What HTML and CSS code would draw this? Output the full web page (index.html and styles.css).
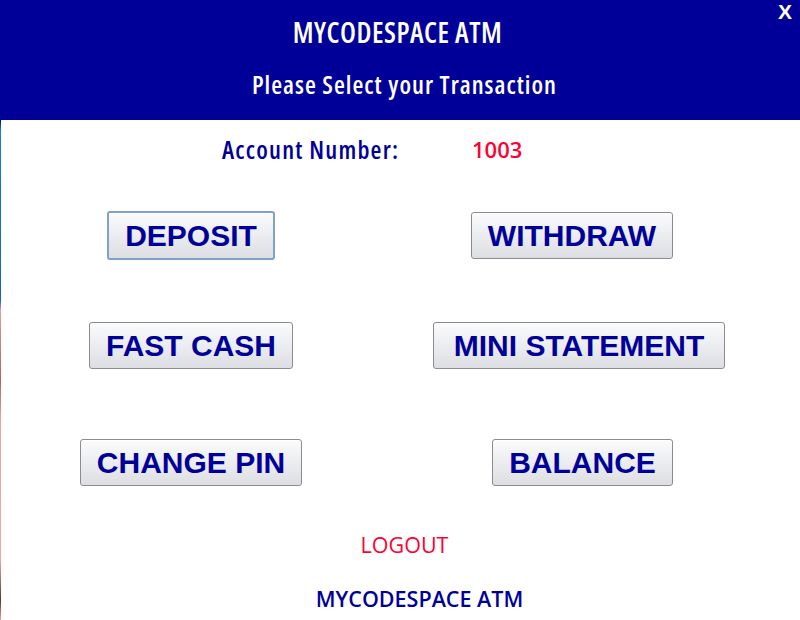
FILE: index.html
```html
<!DOCTYPE html>
<html>
<head>
<meta charset="utf-8">
<link rel="stylesheet" href="styles.css">
</head>
<body>
<div class="window">
  <div class="edge"></div>
  <div class="main">
    <header class="header">
      <div class="close">X</div>
      <div class="title">MYCODESPACE ATM</div>
      <div class="subtitle">Please Select your Transaction</div>
    </header>
    <div class="account">
      <span class="acc-label">Account Number:</span>
      <span class="acc-num">1003</span>
    </div>
    <div class="grid">
      <div class="cell r1"><button class="btn focus">DEPOSIT</button></div>
      <div class="cell r1 right"><button class="btn">WITHDRAW</button></div>
      <div class="cell r2"><button class="btn">FAST CASH</button></div>
      <div class="cell r2 right"><button class="btn wide">MINI STATEMENT</button></div>
      <div class="cell r3"><button class="btn">CHANGE PIN</button></div>
      <div class="cell r3 right"><button class="btn">BALANCE</button></div>
    </div>
    <div class="logout">LOGOUT</div>
    <div class="footer">MYCODESPACE ATM</div>
  </div>
</div>
</body>
</html>
```
FILE: styles.css
```css
html, body {
  margin: 0;
  padding: 0;
  background: #ffffff;
}
.window {
  width: 800px;
  height: 620px;
  display: flex;
  overflow: hidden;
}
.edge {
  width: 1px;
  flex: none;
  background: linear-gradient(#00009a 0, #00009a 120px, #1a7fd0 130px, #1166b8 300px, #e89a9a 310px, #b06060 380px, #f0a0a0 420px, #f4a6a6 560px, #603030 600px, #f0a0a0 620px);
}
.main {
  flex: 1;
  display: flex;
  flex-direction: column;
  font-family: "Open Sans", "Noto Sans", sans-serif;
}
.main > * {
  flex: none;
}
.header {
  position: relative;
  height: 120px;
  background: #000099;
  color: #ffffff;
  display: flex;
  flex-direction: column;
  align-items: center;
  box-sizing: border-box;
  padding-top: 17px;
}
.close {
  position: absolute;
  right: 8px;
  top: 1px;
  font-family: "Liberation Sans", Arial, sans-serif;
  font-weight: bold;
  font-size: 21px;
  line-height: 22px;
}
.title {
  font-size: 28px;
  font-weight: 600;
  font-stretch: 75%;
  letter-spacing: 0.5px;
  line-height: 30px;
  margin-left: -6px;
}
.subtitle {
  margin-top: 22px;
  font-size: 25px;
  font-weight: 600;
  font-stretch: 75%;
  letter-spacing: 1px;
  line-height: 30px;
  margin-left: 8px;
}
.account {
  display: flex;
  margin-top: 14px;
  height: 30px;
  align-items: center;
  font-size: 25px;
  font-weight: 600;
  font-stretch: 75%;
}
.acc-label {
  margin-left: 221px;
  color: #000099;
  width: 250px;
  letter-spacing: 1.2px;
}
.acc-num {
  color: #ff0033;
  font-size: 22px;
  font-stretch: 100%;
}
.grid {
  display: grid;
  grid-template-columns: 380px 396px;
  margin-top: 48px;
}
.cell {
  display: flex;
  justify-content: center;
}
.r1 { height: 110px; }
.r2 { height: 117px; }
.r3 { height: 47px; }
.right.r1 { padding-right: 14px; }
.right.r3 { padding-left: 7px; }
.btn {
  font-family: "Liberation Sans", Arial, sans-serif;
  font-weight: bold;
  font-size: 30px;
  color: #000099;
  height: 47px;
  padding: 0 16px;
  border: 1px solid #8c8c8c;
  border-radius: 3px;
  background: linear-gradient(#fbfbfc 0%, #eceef1 45%, #dcdee3 100%);
  box-shadow: inset 0 1px 0 #ffffff;
  line-height: 45px;
  margin: 0;
}
.btn.wide {
  padding: 0 20px;
}
.btn.focus {
  border: 2px solid #7fa2c8;
  height: 49px;
  margin-top: -1px;
}
.logout {
  margin-top: 44px;
  text-align: center;
  color: #ff0033;
  font-size: 21.5px;
  font-weight: 500;
  line-height: 30px;
  margin-left: 8px;
}
.footer {
  margin-top: 24px;
  text-align: center;
  color: #000099;
  font-size: 21.5px;
  font-weight: 600;
  line-height: 30px;
  margin-left: 38px;
}
```
